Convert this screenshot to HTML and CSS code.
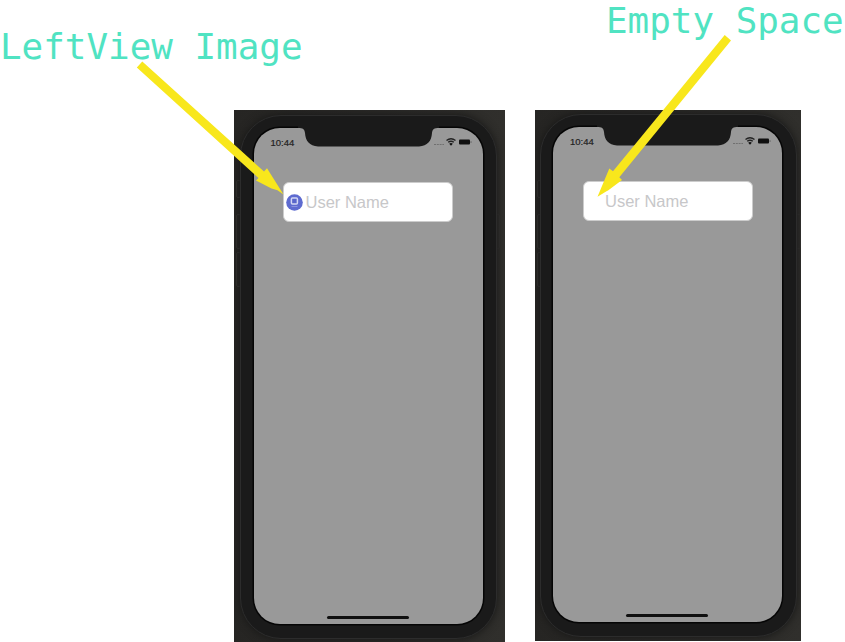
FILE: index.html
```
<!DOCTYPE html>
<html lang="en">
<head>
<meta charset="utf-8">
<title>Text field left view</title>
<link rel="stylesheet" href="styles.css">
</head>
<body>
<main class="compare">
  <figure class="sample sample-left">
    <figcaption class="label">LeftView Image</figcaption>
    <div class="backdrop">
      <i class="key key-mute"></i><i class="key key-up"></i><i class="key key-down"></i><i class="key key-power"></i>
      <div class="phone">
        <div class="screen">
          <svg class="notch" viewBox="0 0 142 20"><path d="M0-2V0C5 0 6.500 1 7 5C7.500 13 11.500 18 20 18.500H121C129.500 18 133.500 13 134 5C134.500 1 136 0 141 0V-2Z"/></svg>
          <div class="status">
            <span class="time">10:44</span>
            <svg class="signals" viewBox="0 0 40 10"><path class="dots" d="M1 7.500H11"/><path class="wifi" d="M13.500 3.500Q18 0 22.500 3.500M15.200 5.300Q18 3.200 20.800 5.300"/><path d="M16.200 6.700Q18 5.500 19.800 6.700L18 8.800Z"/><rect x="26" y="2.500" width="11" height="5" rx="1"/><path class="cap" d="M38 4.200V6"/></svg>
          </div>
          <div class="field">
            <svg class="avatar" viewBox="0 0 17 17"><circle cx="8.500" cy="8.500" r="8.300"/><rect x="5.400" y="4" width="6" height="6" rx="1"/><path d="M5.500 12.500H11.500"/></svg>
            <span class="hint">User Name</span>
          </div>
          <div class="home"></div>
        </div>
      </div>
    </div>
  </figure>
  <figure class="sample sample-right">
    <figcaption class="label">Empty Space</figcaption>
    <div class="backdrop">
      <i class="key key-mute"></i><i class="key key-up"></i><i class="key key-down"></i><i class="key key-power"></i>
      <div class="phone">
        <div class="screen">
          <svg class="notch" viewBox="0 0 142 20"><path d="M0-2V0C5 0 6.500 1 7 5C7.500 13 11.500 18 20 18.500H121C129.500 18 133.500 13 134 5C134.500 1 136 0 141 0V-2Z"/></svg>
          <div class="status">
            <span class="time">10:44</span>
            <svg class="signals" viewBox="0 0 40 10"><path class="dots" d="M1 7.500H11"/><path class="wifi" d="M13.500 3.500Q18 0 22.500 3.500M15.200 5.300Q18 3.200 20.800 5.300"/><path d="M16.200 6.700Q18 5.500 19.800 6.700L18 8.800Z"/><rect x="26" y="2.500" width="11" height="5" rx="1"/><path class="cap" d="M38 4.200V6"/></svg>
          </div>
          <div class="field">
            <span class="hint">User Name</span>
          </div>
          <div class="home"></div>
        </div>
      </div>
    </div>
  </figure>
  <svg class="arrows" viewBox="0 0 845 642">
    <path d="M142.300 61.500L264 171.500L267 168.300L283.500 194.500L277.500 190.300L271.500 188.500L256 180.500L258.500 178L136.800 67.500Z"/>
    <path d="M724.700 35.100L613 171.200L609.300 168.500L597.500 196.700L606.500 191.300L608 190.500L622 180L619.300 177.300L731 40.400Z"/>
  </svg>
</main>
</body>
</html>
```
FILE: styles.css
```
* { box-sizing: border-box; }
body { margin: 0; background: #fff; overflow: hidden; }
.compare {
  position: relative;
  display: grid;
  grid-template-columns: 535px 310px;
  width: 845px;
  height: 642px;
}
.sample { margin: 0; display: flex; flex-direction: column; }
.label {
  height: 110px;
  font: 35.900px/42px "DejaVu Sans Mono", monospace;
  color: #50e3c2;
  white-space: nowrap;
}
.sample-left .label { padding-top: 26px; }
.sample-right .label { padding-left: 71px; }
.backdrop {
  position: relative;
  height: 532px;
  overflow: hidden;
  background: linear-gradient(90deg, #262523, #2a2927 45%, #302f2c);
}
.sample-left .backdrop { margin-left: 234px; width: 271px; padding: 5px 0 0 6px; }
.sample-right .backdrop { width: 266px; height: 531px; padding: 4px 0 0 5px; }
.phone {
  position: relative;
  width: 257px;
  height: 524px;
  border: 1px solid #2c2c2c;
  border-radius: 41px;
  background: #1a1a1a;
  padding: 12px 0 0 12.500px;
  box-shadow: 0 0 8px #171716;
}
.sample-right .phone { padding-left: 12px; height: 523px; }
.screen {
  position: relative;
  width: 229px;
  height: 496px;
  background: #999;
  border-radius: 26px;
  box-shadow: 0 0 0 1.500px #050505;
}
.sample-right .screen { height: 495px; }
.notch {
  position: absolute;
  left: 44px;
  top: 0;
  width: 142px;
  height: 20px;
  overflow: visible;
  fill: #1a1a1a;
}
.status { display: flex; justify-content: space-between; padding: 9px 10px 0 17px; height: 54px; }
.time { font: 9.500px/11px "Liberation Sans", Arial, sans-serif; color: #222; -webkit-text-stroke: .2px #222; }
.signals { width: 40px; height: 10px; fill: #101010; stroke: none; }
.signals .dots { stroke: #707070; stroke-width: 1.200; stroke-dasharray: 2 .800; fill: none; }
.signals .wifi { stroke: #222; stroke-width: 1.400; fill: none; }
.signals .cap { stroke: #666; stroke-width: 1; }
.field {
  margin-left: 29.500px;
  width: 170px;
  height: 40px;
  border: 1px solid #ccc;
  border-radius: 6px;
  background: #fff;
  display: flex;
  align-items: center;
  padding-left: 2px;
}
.sample-right .field { padding-left: 21.500px; }
.hint { font: 16.500px/20px "Liberation Sans", Arial, sans-serif; color: #c7c7c9; white-space: nowrap; }
.avatar { width: 17px; height: 17px; margin-right: 2.500px; fill: #5e6bd0; }
.avatar rect { fill: #5966cb; stroke: #d3d7f3; stroke-width: 1.500; }
.avatar path { stroke: #8a92dd; stroke-width: 1; }
.home { position: absolute; left: 73px; bottom: 5px; width: 82px; height: 3px; border-radius: 2px; background: #101010; }
.key { position: absolute; width: 5px; border: 1px solid #343331; border-radius: 2px; }
.key-mute { left: 2px; top: 70px; height: 18px; }
.key-up { left: 2px; top: 104px; height: 35px; }
.key-down { left: 2px; top: 142px; height: 35px; }
.key-power { left: 261px; top: 104px; height: 35px; }
.arrows { position: absolute; left: 0; top: 0; width: 845px; height: 642px; fill: #f8e71c; pointer-events: none; }
```
